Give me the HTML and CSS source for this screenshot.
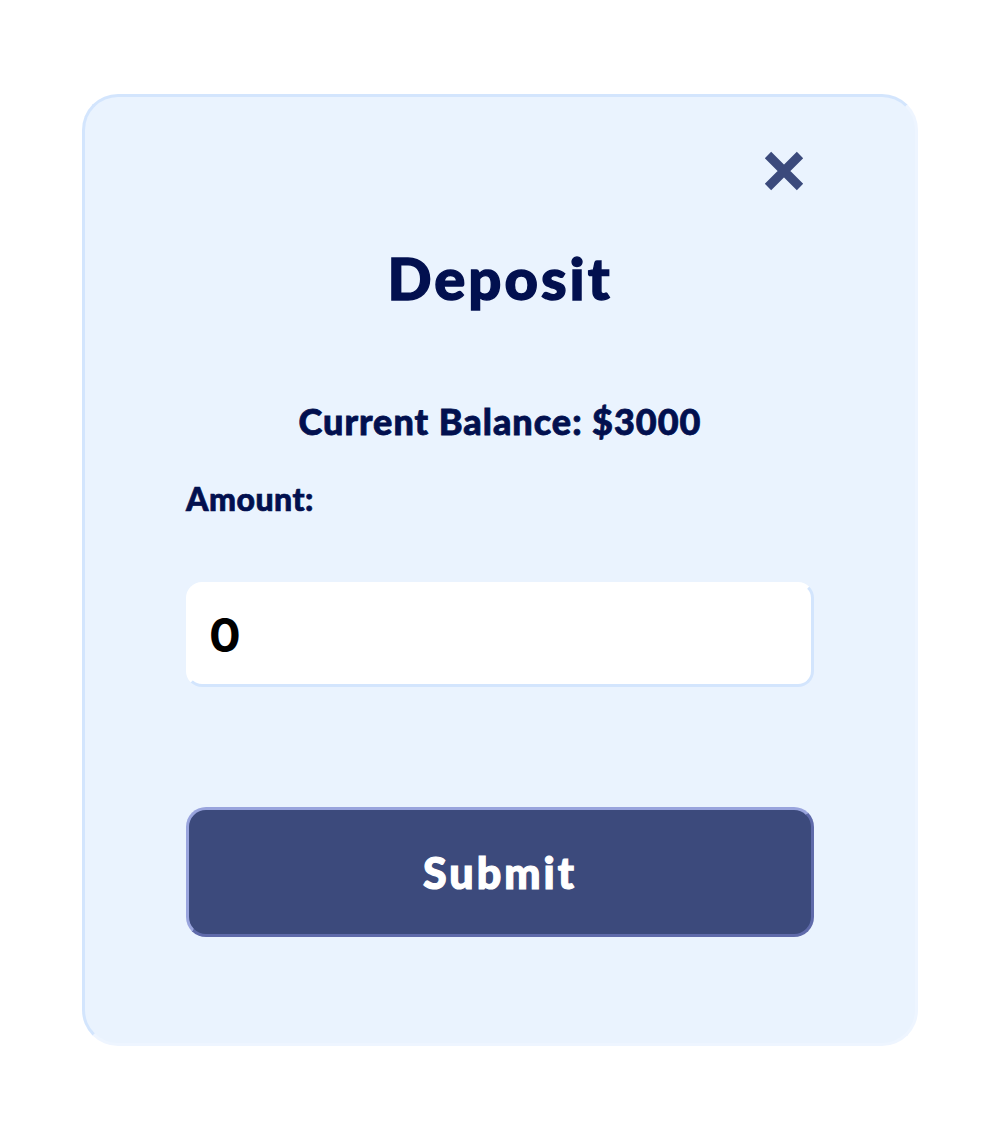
FILE: index.html
```html
<!DOCTYPE html>
<html lang="en">
<head>
<meta charset="utf-8">
<title>Deposit</title>
<link rel="stylesheet" href="styles.css">
</head>
<body>
<div class="page">
  <div class="modal">
    <div class="modal-head">
      <button class="close" aria-label="Close">
        <svg width="40" height="40" viewBox="0 0 40 40"><path d="M4 4 L36 36 M36 4 L4 36" stroke="#3b4a7c" stroke-width="9" stroke-linecap="butt" fill="none"/></svg>
      </button>
    </div>
    <h1 class="title">Deposit</h1>
    <p class="balance">Current Balance: $3000</p>
    <label class="label" for="amount">Amount:</label>
    <input class="amount" id="amount" type="text" value="0">
    <button class="submit">Submit</button>
  </div>
</div>
</body>
</html>
```

FILE: styles.css
```css
* { box-sizing: border-box; }
html, body { margin: 0; padding: 0; background: #ffffff; }
body { font-family: Lato, "Noto Sans", sans-serif; }
.page { padding: 94px 0 0 82px; }
.modal {
  width: 836px;
  height: 952px;
  background: #eaf3fe;
  border: 3px solid;
  border-color: #d3e5fd #eef5ff #eef5ff #d3e5fd;
  border-radius: 36px;
  padding: 0 101px;
  display: flex;
  flex-direction: column;
}
.modal-head {
  display: flex;
  justify-content: flex-end;
  padding-top: 54px;
  padding-right: 10px;
}
.close {
  width: 40px; height: 40px;
  padding: 0; border: 0; background: none;
  display: block;
}
.close svg { display: block; }
.title {
  margin: 51px 0 0;
  text-align: center;
  font-size: 58px;
  font-weight: 900;
  line-height: 72px;
  letter-spacing: 3px;
  -webkit-text-stroke: 1.4px #02104f;
  color: #02104f;
}
.balance {
  margin: 85px 0 0;
  text-align: center;
  font-size: 36px;
  font-weight: 900;
  line-height: 44px;
  letter-spacing: 1px;
  -webkit-text-stroke: 0.8px #02104f;
  color: #02104f;
}
.label {
  margin-top: 38px;
  font-size: 32px;
  font-weight: 900;
  line-height: 36px;
  letter-spacing: 0.5px;
  -webkit-text-stroke: 0.7px #02104f;
  color: #02104f;
}
.amount {
  margin-top: 65px;
  height: 105px;
  width: 100%;
  background: #ffffff;
  border: 3px solid;
  border-color: #ffffff #d3e5fd #d3e5fd #ffffff;
  border-radius: 16px;
  padding: 0 0 0 20px;
  font-family: Inter, "Noto Sans", sans-serif;
  font-weight: 700;
  font-size: 47px;
  color: #000000;
  outline: none;
}
.submit {
  margin-top: 120px;
  height: 130px;
  width: 100%;
  background: #3c4a7c;
  border: 3px solid;
  border-color: #99a4dd #5f6aaa #5f6aaa #99a4dd;
  border-radius: 20px;
  font-family: Lato, "Noto Sans", sans-serif;
  font-weight: 900;
  font-size: 43px;
  letter-spacing: 3px;
  -webkit-text-stroke: 1.2px #ffffff;
  color: #ffffff;
}
```
